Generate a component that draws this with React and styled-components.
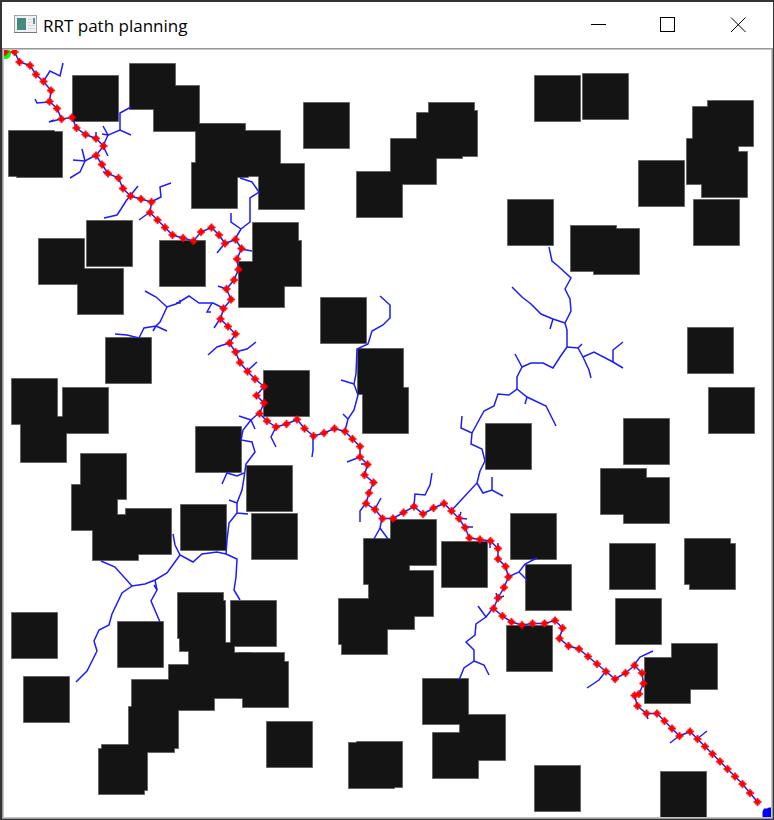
import React from "react";
import styled, { createGlobalStyle } from "styled-components";

const GlobalStyle = createGlobalStyle`
  * { box-sizing: border-box; }
  body { margin: 0; background: #343436; }
`;

const Desktop = styled.div`
  min-height: 100vh;
  padding: 2px 1px 1px 2px;
  background: #343436;
`;

const Window = styled.main`
  display: flex;
  flex-direction: column;
  background: #fff;
`;

const TitleBar = styled.header`
  display: flex;
  align-items: center;
  height: 46px;
  padding-left: 12px;
  background: #fff;
`;

const AppIcon = styled.svg`
  flex: none;
  width: 24px;
  height: 20px;
  margin-right: 5px;
`;

const Title = styled.h1`
  flex: 1;
  margin: 0;
  padding-top: 2px;
  color: #000;
  font: 400 17px/24px "Open Sans", "Noto Sans", sans-serif;
  white-space: nowrap;
`;

const WindowControls = styled.div`
  display: flex;
  align-self: stretch;
`;

const ControlButton = styled.button`
  display: grid;
  place-items: center;
  width: 70px;
  padding: 0;
  border: 0;
  background: transparent;
  color: #000;
  &:hover { background: ${(p) => (p.$danger ? "#e81123" : "#e5e5e5")}; }
`;

const Glyph = styled.svg`
  display: block;
  width: 16px;
  height: 16px;
  fill: none;
  stroke: currentColor;
`;

const Viewport = styled.section`
  border: 1px solid #999;
`;

const Canvas = styled.svg`
  display: block;
  width: 100%;
  height: auto;
  background: #fff;
  outline: 1px solid #c4c4c4;
  outline-offset: -1px;
`;

const obstacles = [
  [72, 75], [129, 63], [153, 85], [8, 130], [16, 131], [195, 123], [199, 123], [202, 131],
  [234, 130], [191, 162], [258, 163], [86, 220], [38, 238], [77, 268], [159, 240],
  [105, 337], [11, 378], [62, 387], [238, 261], [252, 222], [255, 240], [20, 416],
  [80, 453], [71, 484], [92, 514], [125, 508], [195, 426], [180, 504], [246, 465],
  [251, 513], [177, 592], [230, 600], [11, 612], [23, 676], [117, 621], [179, 600],
  [179, 605], [188, 642], [168, 664], [131, 679], [128, 706], [132, 702], [101, 744],
  [98, 748], [205, 652], [238, 652], [242, 661], [303, 102], [428, 102], [431, 110],
  [416, 112], [390, 138], [356, 171], [507, 199], [320, 297], [263, 370], [357, 348],
  [362, 387], [485, 423], [390, 519], [363, 538], [387, 570], [368, 583], [338, 598],
  [341, 608], [441, 541], [506, 625], [266, 721], [422, 678], [459, 714], [432, 732],
  [348, 742], [356, 741], [534, 75], [582, 73], [707, 100], [692, 106], [686, 138],
  [701, 151], [638, 160], [693, 199], [570, 225], [593, 228], [687, 327], [708, 387],
  [623, 418], [600, 468], [623, 477], [510, 513], [609, 543], [684, 538], [689, 543],
  [525, 564], [615, 598], [644, 657], [671, 643], [534, 765], [660, 771],
];

const route = [
  [5, 52], [14.5, 52], [19.5, 62], [30, 65.5], [36, 74.5], [43.5, 81.5], [51, 90.5],
  [49.5, 101.5], [57, 108.5], [61.5, 119], [72, 117.5], [76.5, 128], [85.5, 134.5],
  [96, 138.5], [103.5, 146], [96, 155.5], [102, 164.5], [108, 173.5], [118.5, 178],
  [123, 188.5], [130.5, 196], [141, 199], [151.5, 202], [150, 212.5], [157.5, 220],
  [165, 227.5], [172.5, 235], [183, 238], [193.5, 241], [201, 232], [211.5, 227.5],
  [219, 235], [225, 243.5], [235.5, 239.5], [241.5, 248.5], [237, 259], [238.5, 269.5],
  [234, 280], [226.5, 289], [231, 299.5], [223.5, 308.5], [220.5, 319], [228, 326.5],
  [235.5, 334], [229.5, 343], [235.5, 352], [240, 362.5], [247.5, 371.5], [255, 379],
  [264, 386.5], [256.5, 395.5], [264, 403], [259.5, 413.5], [267, 421], [276, 427],
  [286.5, 424], [297, 419.5], [304.5, 428.5], [313.5, 436], [324, 433], [334.5, 428.5],
  [345, 431.5], [352.5, 439], [360, 446.5], [360, 457], [367.5, 464.5], [364.5, 475],
  [373.5, 482.5], [369, 493], [366, 503.5], [375, 509.5], [382.5, 518.5], [393, 518.5],
  [403.5, 512.5], [414, 506.5], [423, 514], [433.5, 508], [444, 503.5], [451.5, 511],
  [459, 518.5], [465, 527.5], [469.5, 538], [480, 539.5], [490.5, 541], [498, 548.5],
  [498, 559], [505.5, 566.5], [508.5, 577], [504, 587.5], [498, 598], [493.5, 608.5],
  [502.5, 616], [511.5, 622], [522, 625], [532.5, 623.5], [544.5, 623.5], [555, 620.5],
  [562.5, 628], [559.5, 638.5], [568.5, 646], [579, 649], [588, 656.5], [597, 664],
  [606, 671.5], [615, 679], [625.5, 673], [634.5, 665.5], [642, 673], [643.5, 683.5],
  [639, 694], [634.5, 695.5], [637.5, 706], [646.5, 713.5], [657, 713.5], [664.5, 721],
  [672, 728.5], [679.5, 736], [690, 731.5], [697.5, 739], [705, 746.5], [712.5, 754],
  [720, 761.5], [727.5, 769], [735, 776.5], [742.5, 784], [750, 793], [757.5, 802],
];

const branches = [
  "43,82 50,71 60,76 63,63", "49,102 37,103 35,99", "61,119 49,122 54,120",
  "103,146 108,135 120,130 131,135", "120,130 120,113 131,107", "103,126 108,135 102,134",
  "96,139 96,132", "103,146 108,156", "96,155 85,161 73,160", "82,149 85,161 80,172 70,178",
  "108,173 103,172", "130,196 138,186", "130,196 126,201 121,209 117,215 104,218",
  "151,202 161,197 160,187 171,183", "150,212 139,220", "225,243 217,253",
  "235,239 241,229 250,222 250,198 259,192 252,182 240,178", "241,229 231,222 231,213",
  "241,249 252,251", "226,289 218,286",
  "223,308 213,303 199,303 189,296 176,304 167,307 156,297 145,291",
  "167,307 160,322 156,326 144,328 139,338 127,335 115,334", "156,326 167,331", "156,326 153,331",
  "212,303 207,312 211,312", "180,300 180,303 176,303", "220,319 214,328",
  "229,343 217,347 208,355", "235,352 247,349 256,342", "247,371 257,362",
  "259,413 251,420 255,429", "251,420 239,416",
  "251,420 243,430 241,440 252,442 255,452 246,464 244,478 242,490 237,503 237,513 248,514",
  "237,503 229,500", "237,513 229,523 227,540 226,554", "244,473 237,476 227,473 222,484",
  "226,554 237,559 236,577 234,590 240,600",
  "226,554 217,552 202,554 193,562 180,555 175,545 173,534",
  "180,555 167,573 155,580 145,584 132,586 115,567 101,561",
  "132,586 122,593 112,614 109,625 99,630 94,641 97,651 87,671 76,682",
  "155,580 157,590 151,601 160,622", "154,585 157,590",
  "276,427 271,437 276,447", "313,436 313,450 312,457",
  "345,431 348,419 354,410 358,395 354,384 356,374 357,349 368,344 372,331 383,325 390,318 390,305 380,296",
  "354,384 341,380", "348,419 343,414", "360,457 347,462", "367,464 361,464",
  "366,503 360,511 360,522", "375,509 381,498", "382,518 380,528 374,539", "380,528 388,539",
  "414,506 415,494 425,495 430,485 432,473",
  "451,511 477,483 480,471 485,461 482,449 471,444 472,433 461,428 462,416",
  "472,433 484,411 494,406 498,394 509,395 517,389 517,377 522,367 515,354",
  "522,367 531,363 543,363 553,368 560,357 567,347 567,330 565,323 571,311 570,299 565,289 571,278 558,266 552,261 549,247",
  "565,323 553,319 541,314 531,304 522,297 512,287", "553,319 550,329",
  "567,347 578,348 582,344", "578,348 583,357 589,370 591,378",
  "583,357 594,352 613,362 623,368", "613,362 613,350 623,342",
  "517,389 527,397 546,406 556,426", "527,397 525,404",
  "477,483 483,493 492,490 503,496", "492,490 492,477", "459,518 461,512", "459,518 467,519",
  "465,527 473,527", "490,541 490,548", "498,548 498,543", "508,577 519,572 525,564 537,558",
  "519,572 527,580", "498,598 496,593", "498,598 504,596", "493,608 486,617 478,606",
  "486,617 476,624 475,635 466,642 474,650 474,661 464,668 459,680", "474,661 484,665 489,675",
  "606,671 599,680 587,688", "634,665 640,657 653,651", "646,713 648,719",
  "679,736 670,743", "697,739 707,731",
];

function Planner() {
  return (
    <Canvas viewBox="3 49 769 769" role="img" aria-label="Random tree growing between obstacles">
      <g fill="#808080">
        {obstacles.map(([x, y]) => (
          <rect key={`${x}-${y}`} x={x} y={y} width="47" height="47" />
        ))}
      </g>
      <g fill="#141414">
        {obstacles.map(([x, y]) => (
          <rect key={`${x}-${y}`} x={x + 0.75} y={y + 0.75} width="45.5" height="45.5" />
        ))}
      </g>
      <g fill="none" stroke="#1c1cff" strokeWidth="1.5">
        {branches.map((points) => (
          <polyline key={points} points={points} />
        ))}
        <polyline points={route.map((p) => p.join()).join(" ")} />
      </g>
      <circle cx="5.5" cy="53.5" r="5.5" fill="#0f0" />
      <g fill="#f00">
        {route.map(([x, y]) => (
          <path
            key={`${x}-${y}`}
            d={`M${x - 0.75} ${y - 3.75}h1.5v1.5h1.5v1.5h1.5v1.5h-1.5v1.5h-1.5v1.5h-1.5v-1.5h-1.5v-1.5h-1.5v-1.5h1.5v-1.5h1.5z`}
            transform="translate(0 0)"
            stroke="#f00"
            strokeWidth=".4"
          />
        ))}
      </g>
      <path d="M764 808.500h3l2-1h2v1h2v11h-8l-2.500-3v-5z" fill="#00f" />
    </Canvas>
  );
}

export default function App() {
  return (
    <>
      <GlobalStyle />
      <Desktop>
        <Window>
          <TitleBar>
            <AppIcon viewBox="0 0 24 20" aria-hidden="true">
              <defs>
                <linearGradient id="scene" x1="0" y1="0" x2="1" y2="1">
                  <stop offset="0" stopColor="#3f7fa0" />
                  <stop offset=".5" stopColor="#43906f" />
                  <stop offset="1" stopColor="#4682ac" />
                </linearGradient>
                <linearGradient id="strip" x1="0" y1="0" x2="0" y2="1">
                  <stop offset="0" stopColor="#4a8fb5" />
                  <stop offset="1" stopColor="#55a56b" />
                </linearGradient>
              </defs>
              <rect x=".5" y=".5" width="22" height="17" fill="#f1f1f1" stroke="#a3a3a3" />
              <path d="M0 17.500h23" stroke="#777" />
              <rect x="3" y="3" width="9" height="12" fill="url(#scene)" />
              <path d="M14 4.500h4M14 7.500h3M14 10.500h7M14 13.500h7" stroke="#d3d7da" />
              <rect x="19" y="3" width="2" height="6" fill="url(#strip)" />
            </AppIcon>
            <Title>RRT path planning</Title>
            <WindowControls>
              <ControlButton type="button" aria-label="Minimize">
                <Glyph viewBox="0 0 16 16"><path d="M1 7.500h15" /></Glyph>
              </ControlButton>
              <ControlButton type="button" aria-label="Maximize">
                <Glyph viewBox="0 0 16 16"><rect x=".5" y=".5" width="14" height="14" /></Glyph>
              </ControlButton>
              <ControlButton type="button" aria-label="Close" $danger>
                <Glyph viewBox="0 0 16 16"><path d="M1 .5l14.500 14.500M15.500 .5L1 15" /></Glyph>
              </ControlButton>
            </WindowControls>
          </TitleBar>
          <Viewport aria-label="Planner view">
            <Planner />
          </Viewport>
        </Window>
      </Desktop>
    </>
  );
}
